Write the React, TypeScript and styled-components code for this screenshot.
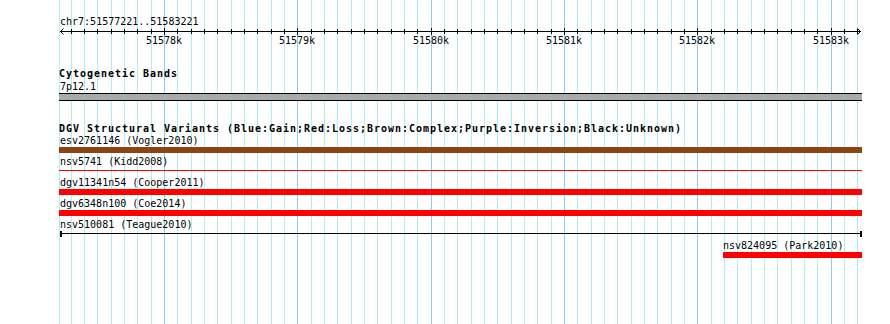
import React from "react";
import styled, { createGlobalStyle } from "styled-components";

const VIEW_START = 51577221;
const VIEW_END = 51583221;
const ORIGIN = 60.1;
const BP_PER_PX = 7.5;
const PANEL_LEFT = 59;
const PANEL_RIGHT = 862;
const PANEL_WIDTH = PANEL_RIGHT - PANEL_LEFT;
const AXIS_LEFT = 60;
const AXIS_RIGHT = 860;

const toX = (bp: number) => Math.round(ORIGIN + (bp - VIEW_START) / BP_PER_PX);

type Glyph = "box" | "line";
interface FeatureData {
  name: string;
  start: number;
  end: number;
  color: string;
  glyph: Glyph;
  caps?: boolean;
}

const features: FeatureData[] = [
  { name: "esv2761146 (Vogler2010)", start: 51560000, end: 51600000, color: "#8b4513", glyph: "box" },
  { name: "nsv5741 (Kidd2008)", start: 51560000, end: 51600000, color: "#ff0000", glyph: "line" },
  { name: "dgv11341n54 (Cooper2011)", start: 51560000, end: 51600000, color: "#ff0000", glyph: "box" },
  { name: "dgv6348n100 (Coe2014)", start: 51560000, end: 51600000, color: "#ff0000", glyph: "box" },
  { name: "nsv510081 (Teague2010)", start: 51577221, end: 51583240, color: "#000000", glyph: "line", caps: true },
  { name: "nsv824095 (Park2010)", start: 51582195, end: 51600000, color: "#ff0000", glyph: "box" },
];

const gridLines: { x: number; major: boolean }[] = [{ x: PANEL_LEFT, major: false }];
const ticks: { x: number; major: boolean; bp: number }[] = [];
for (let bp = 51577300; bp <= 51583200; bp += 100) {
  const major = bp % 1000 === 0;
  gridLines.push({ x: toX(bp), major });
  ticks.push({ x: toX(bp), major, bp });
}

const GlobalStyle = createGlobalStyle`
  html, body {
    margin: 0;
    padding: 0;
    background: #ffffff;
  }
  body {
    font-family: "DejaVu Sans Mono", "Liberation Mono", monospace;
    color: #000000;
  }
`;

const Canvas = styled.div`
  position: relative;
  width: 890px;
  height: 324px;
  overflow: hidden;
  background: #ffffff;
`;

const GridLayer = styled.svg`
  position: absolute;
  left: 0;
  top: 0;
  width: 890px;
  height: 324px;
  z-index: 0;
`;

const Content = styled.div`
  position: relative;
  z-index: 1;
  display: flex;
  flex-direction: column;
  margin-left: ${PANEL_LEFT}px;
  width: ${PANEL_WIDTH}px;
`;

const SmallText = styled.div`
  font-family: "DejaVu Sans Mono", "Liberation Mono", monospace;
  font-size: 10px;
  white-space: nowrap;
`;

const Ruler = styled.section`
  display: flex;
  flex-direction: column;
  padding-top: 15px;
`;

const RulerTitle = styled(SmallText)`
  line-height: 13px;
  height: 13px;
  padding-left: 1px;
`;

const Axis = styled.svg`
  display: block;
  width: ${PANEL_WIDTH}px;
  height: 6px;
  overflow: visible;
`;

const TickLabels = styled.div`
  position: relative;
  height: 13px;
`;

const TickLabel = styled(SmallText)`
  position: absolute;
  top: 0;
  line-height: 13px;
  transform: translateX(-50%);
`;

const Track = styled.section<{ $gap: number }>`
  display: flex;
  flex-direction: column;
  margin-top: ${(p) => p.$gap}px;
`;

const TrackTitle = styled.div`
  font-family: "DejaVu Sans Mono", "Liberation Mono", monospace;
  font-weight: bold;
  font-size: 10px;
  letter-spacing: 0.98px;
  line-height: 12px;
  height: 12px;
  white-space: nowrap;
`;

const BandLabel = styled(SmallText)`
  line-height: 13px;
  height: 13px;
  padding-left: 1px;
`;

const BandBar = styled.div`
  height: 6px;
  background: #aaaaaa;
  border-top: 1px solid #000000;
  border-bottom: 1px solid #000000;
`;

const FeatureRow = styled.div`
  height: 21px;
  display: flex;
`;

const Feature = styled.div`
  display: flex;
  flex-direction: column;
`;

const FeatureLabel = styled(SmallText)`
  line-height: 12px;
  height: 12px;
`;

const BoxGlyph = styled.div<{ $color: string }>`
  height: 6px;
  background: ${(p) => p.$color};
`;

const LineGlyph = styled.div<{ $color: string; $caps: boolean }>`
  box-sizing: border-box;
  height: 6px;
  padding-top: 2px;
  border-left: ${(p) => (p.$caps ? `2px solid ${p.$color}` : "none")};
  border-right: ${(p) => (p.$caps ? `2px solid ${p.$color}` : "none")};
`;

const LineStroke = styled.div<{ $color: string }>`
  height: 1px;
  background: ${(p) => p.$color};
`;

function FeatureItem({ f }: { f: FeatureData }) {
  const x0 = Math.max(PANEL_LEFT, toX(f.start));
  const x1 = Math.min(PANEL_RIGHT, toX(f.end));
  const labelX = Math.max(AXIS_LEFT, x0);
  return (
    <FeatureRow>
      <Feature style={{ marginLeft: x0 - PANEL_LEFT, width: x1 - x0 }}>
        <FeatureLabel style={{ paddingLeft: labelX - x0 }}>{f.name}</FeatureLabel>
        {f.glyph === "box" ? (
          <BoxGlyph $color={f.color} />
        ) : (
          <LineGlyph $color={f.color} $caps={!!f.caps}>
            <LineStroke $color={f.color} />
          </LineGlyph>
        )}
      </Feature>
    </FeatureRow>
  );
}

export default function App() {
  const ax0 = AXIS_LEFT - PANEL_LEFT;
  const ax1 = AXIS_RIGHT - PANEL_LEFT;
  return (
    <>
      <GlobalStyle />
      <Canvas>
        <GridLayer viewBox="0 0 890 324" shapeRendering="crispEdges">
          {gridLines.map((g, i) => (
            <rect
              key={i}
              x={g.x}
              y={0}
              width={1}
              height={324}
              fill={g.major ? "#87cefa" : "#afeeee"}
            />
          ))}
        </GridLayer>
        <Content>
          <Ruler>
            <RulerTitle>
              chr7:{VIEW_START}..{VIEW_END}
            </RulerTitle>
            <Axis viewBox={`0 0 ${PANEL_WIDTH} 6`} shapeRendering="crispEdges">
              <rect x={ax0} y={3} width={ax1 - ax0 + 1} height={1} fill="#000" />
              {ticks.map((t, i) => (
                <rect
                  key={i}
                  x={t.x - PANEL_LEFT}
                  y={t.major ? 0 : 1}
                  width={1}
                  height={t.major ? 7 : 5}
                  fill="#000"
                />
              ))}
              <polyline
                points={`${ax0 + 3.5},0.5 ${ax0 + 0.5},3.5 ${ax0 + 3.5},6.5`}
                fill="none"
                stroke="#000"
                strokeWidth={1}
                shapeRendering="auto"
              />
              <polyline
                points={`${ax1 - 2.5},0.5 ${ax1 + 0.5},3.5 ${ax1 - 2.5},6.5`}
                fill="none"
                stroke="#000"
                strokeWidth={1}
                shapeRendering="auto"
              />
            </Axis>
            <TickLabels>
              {ticks
                .filter((t) => t.major)
                .map((t) => (
                  <TickLabel key={t.bp} style={{ left: t.x - PANEL_LEFT }}>
                    {t.bp / 1000}k
                  </TickLabel>
                ))}
            </TickLabels>
          </Ruler>

          <Track $gap={21}>
            <TrackTitle>Cytogenetic Bands</TrackTitle>
            <BandLabel>7p12.1</BandLabel>
            <BandBar />
          </Track>

          <Track $gap={22}>
            <TrackTitle>
              DGV Structural Variants (Blue:Gain;Red:Loss;Brown:Complex;Purple:Inversion;Black:Unknown)
            </TrackTitle>
            {features.map((f) => (
              <FeatureItem key={f.name} f={f} />
            ))}
          </Track>
        </Content>
      </Canvas>
    </>
  );
}
